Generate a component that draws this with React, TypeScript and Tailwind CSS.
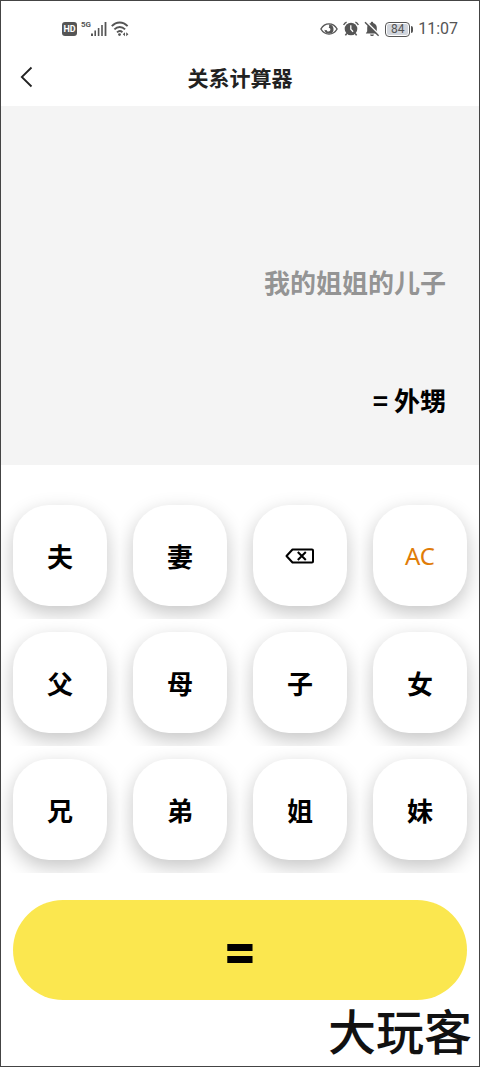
import { useState, type ReactNode } from "react";

const INITIAL_CHAIN = ["姐姐", "儿子"];

const RELATIONS: Record<string, string> = {
  夫: "老公",
  妻: "老婆",
  父: "爸爸",
  母: "妈妈",
  子: "儿子",
  女: "女儿",
  兄: "哥哥",
  弟: "弟弟",
  姐: "姐姐",
  妹: "妹妹",
};

function SignalIcon() {
  return (
    <svg width="16" height="16" viewBox="0 0 16 16" fill="#555" aria-hidden="true">
      <rect x="0" y="12.5" width="2" height="2.5" />
      <rect x="3.4" y="9.5" width="1.6" height="5.5" />
      <rect x="6.8" y="7" width="1.6" height="8" />
      <rect x="10.2" y="4" width="1.6" height="11" />
      <rect x="13.6" y="1" width="1.8" height="14" />
    </svg>
  );
}

function WifiIcon() {
  return (
    <svg width="18" height="16" viewBox="0 0 18 16" fill="none" stroke="#555" strokeWidth="1.9" aria-hidden="true">
      <path d="M.8 5.2C5.4.3 12 .3 16.6 5.2" />
      <path d="M3.4 8.4c3.2-3.3 7.5-3.3 10.7 0" />
      <path d="M6 11.4c1.8-1.6 3.8-1.6 5.4-.2" />
      <circle cx="8.5" cy="13.6" r="1.4" fill="#555" stroke="none" />
      <path d="M14 11.2v4l-2.2-2zM15.2 11.2v4l2.2-2z" fill="#555" stroke="none" />
    </svg>
  );
}

function EyeIcon() {
  return (
    <svg width="18" height="14" viewBox="0 0 18 14" aria-hidden="true">
      <path d="M.9 7C4.8.2 13.2.2 17.1 7 13.2 13.8 4.8 13.8.9 7Z" fill="none" stroke="#555" strokeWidth="1.4" />
      <path d="M8.8 2.4a4.600 4.600 0 1 1-4.400 5.400c.8.5 1.800.5 2.500.1-.1.900.600 1.600 1.500 1.600 1.100 0 2-.9 2-2s-.8-1.800-1.700-1.800c.600-1 .700-2.200.1-3.300Z" fill="#555" />
    </svg>
  );
}

function AlarmIcon() {
  return (
    <svg width="16" height="16" viewBox="0 0 16 16" fill="none" stroke="#555" aria-hidden="true">
      <circle cx="8" cy="8" r="6.3" fill="#555" stroke="none" />
      <path d="M.6 4A6 6 0 0 1 3.6 1.1M15.4 4a6 6 0 0 0-3-2.9" strokeWidth="1.4" />
      <path d="m3.800 12.400-1.400 2M12.200 12.400l1.400 2" strokeWidth="1.6" />
      <path d="M7.8 4.3v4l2.3 2.4" stroke="#fff" strokeWidth="1.3" />
    </svg>
  );
}

function BellOffIcon() {
  return (
    <svg width="16" height="16" viewBox="0 0 16 16" aria-hidden="true">
      <path
        d="M8 .8c.8 0 1.2.5 1.2 1.1 2.2.6 3.6 2.4 3.6 4.8v3.6l1.4 2.1H1.8l1.4-2.1V6.7c0-2.4 1.4-4.2 3.6-4.8C6.8 1.3 7.2.8 8 .8Z"
        fill="#555"
      />
      <path d="M6 13.5h4C9.7 15.6 6.3 15.6 6 13.5Z" fill="#555" />
      <path d="M2 .4 15.6 14" stroke="#fff" strokeWidth="1.5" />
      <path d="M1 1.2 14.6 14.8" stroke="#555" strokeWidth="1.4" />
    </svg>
  );
}

function DeleteIcon() {
  return (
    <svg width="30" height="16" viewBox="0 0 30 16" fill="none" stroke="#000" strokeWidth="2" strokeLinejoin="round" aria-hidden="true">
      <path d="M7.500 1.500H27a1 1 0 0 1 1 1v11a1 1 0 0 1-1 1H7.500L1.500 8Z" />
      <path d="m12.800 4 8 8M20.800 4l-8 8" />
    </svg>
  );
}

function StatusBar() {
  return (
    <div className="flex h-[58px] items-center justify-between pr-[22px] pl-[62px] text-[#555]">
      <div className="flex items-center">
        <span className="flex h-[14px] w-[15px] items-center justify-center rounded-[3px] bg-[#555] font-['Roboto',sans-serif] text-[9px] leading-none font-bold text-white">
          HD
        </span>
        <span className="mb-2 ml-1 font-['Roboto',sans-serif] text-[8px] leading-none font-bold">5G</span>
        <SignalIcon />
        <span className="ml-1">
          <WifiIcon />
        </span>
      </div>
      <div className="flex items-center gap-[5px]">
        <EyeIcon />
        <AlarmIcon />
        <BellOffIcon />
        <span className="flex items-center gap-px">
          <span className="flex h-[15px] w-[25px] items-center justify-center rounded-[4px] border border-[#555] p-px">
            <span className="flex h-full w-full items-center justify-center rounded-[2px] bg-gray-300 font-['Roboto',sans-serif] text-[12px] leading-none">
              84
            </span>
          </span>
          <span className="h-[7px] w-[2px] rounded-r bg-[#555]" />
        </span>
        <time className="font-['Roboto',sans-serif] text-[16px] leading-5">11:07</time>
      </div>
    </div>
  );
}

function Key({ label, onClick, children }: { label: string; onClick: () => void; children: ReactNode }) {
  return (
    // Each cell clips the shadow of its own key.
    <div className="overflow-hidden p-[13px]">
      <button
        type="button"
        aria-label={label}
        onClick={onClick}
        className="flex h-[101px] w-full items-center justify-center rounded-[36px] bg-white text-[26px] font-bold text-black shadow-[0_7px_20px_rgba(0,0,0,0.23)]"
      >
        {children}
      </button>
    </div>
  );
}

export default function App() {
  const [chain, setChain] = useState(INITIAL_CHAIN);
  const [result, setResult] = useState("外甥");

  const push = (key: string) => {
    setChain([...chain, RELATIONS[key]]);
    setResult("");
  };

  const relationKey = (key: string) => (
    <Key key={key} label={key} onClick={() => push(key)}>
      {key}
    </Key>
  );

  return (
    <main className="flex min-h-screen flex-col bg-white font-['Noto_Sans_CJK_SC',sans-serif] outline-1 -outline-offset-1 outline-[#444]">
      <StatusBar />
      <header className="grid h-12 grid-cols-[1fr_auto_1fr] items-center px-5 pb-2.5">
        <button type="button" aria-label="返回" className="justify-self-start">
          <svg width="14" height="22" viewBox="0 0 14 22" fill="none" stroke="#222" strokeWidth="1.8" aria-hidden="true">
            <path d="M11.5 1.5 1.8 11l9.700 9.500" />
          </svg>
        </button>
        <h1 className="text-[21px] leading-8 font-bold text-[#222]">关系计算器</h1>
      </header>

      <section className="flex flex-col gap-[78px] bg-[#f4f4f4] pt-[156px] pr-[34px] pb-[45px] text-right text-[26px] leading-10 font-bold">
        <p className="text-[#949494]">{["我", ...chain].join("的")}</p>
        <output className="text-black">= {result}</output>
      </section>

      <section className="grid grid-cols-4 pt-[27px]">
        {["夫", "妻"].map(relationKey)}
        <Key label="删除" onClick={() => setChain(chain.slice(0, -1))}>
          <DeleteIcon />
        </Key>
        <Key label="AC" onClick={() => setChain([])}>
          <span className="font-['Noto_Sans',sans-serif] text-[24px] font-normal text-[#e07c08]">AC</span>
        </Key>
        {["父", "母", "子", "女", "兄", "弟", "姐", "妹"].map(relationKey)}
      </section>

      <div className="px-[13px] pt-[27px]">
        <button
          type="button"
          className="flex h-[100px] w-full items-center justify-center rounded-full bg-[#fbe74f] font-['Inter',sans-serif] text-[50px] leading-none font-extrabold text-black"
        >
          =
        </button>
      </div>

      <footer className="flex justify-end px-2 text-[48px] leading-[58px] font-medium text-[#111]">大玩客</footer>
    </main>
  );
}
